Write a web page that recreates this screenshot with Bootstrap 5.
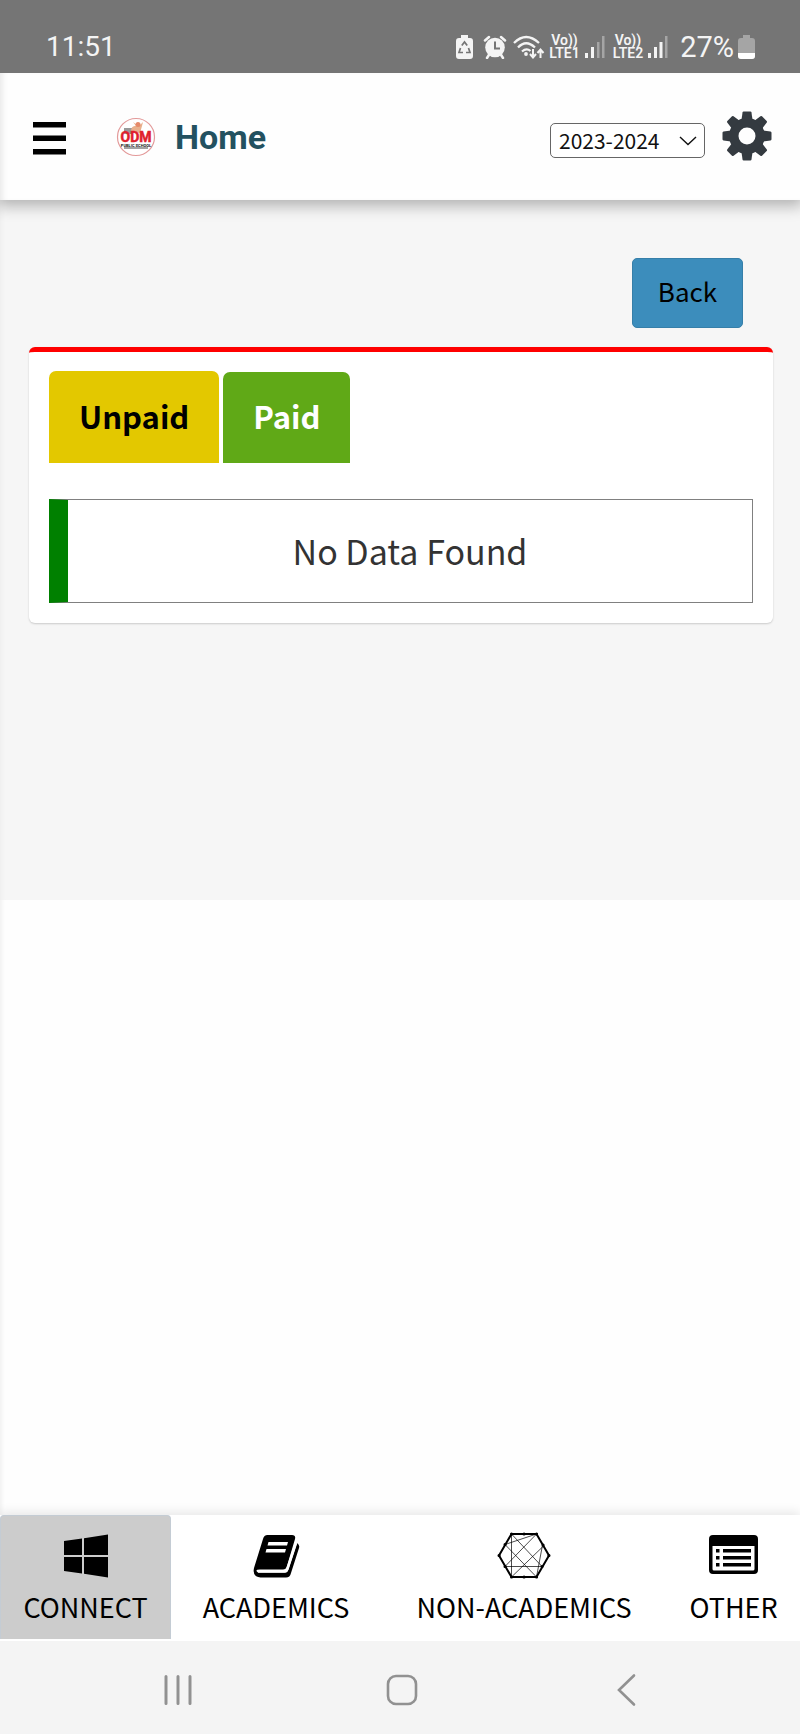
<!DOCTYPE html>
<html lang="en">
<head>
<meta charset="utf-8">
<meta name="viewport" content="width=device-width, initial-scale=1">
<title>Home</title>
<link href="https://cdn.jsdelivr.net/npm/bootstrap@5.3.0/dist/css/bootstrap.min.css" rel="stylesheet">
<style>
body { font-family: "Noto Sans CJK JP", "Noto Sans", sans-serif; color: #000; background: #fefefe; }
svg { display: block; flex: none; }
.status-bar { background: #757575; color: #f4f4f4; font-family: Roboto, sans-serif; padding: 24px 45px 0 46px; height: 73px; z-index: 2; }
.clock { font-size: 28px; line-height: 46px; }
.charge { font-size: 29px; line-height: 46px; }
.volte { font-size: 14px; line-height: 13px; font-weight: 600; }
.app-view { box-shadow: inset 5px 0 5px -4px #ececec; }
.app-bar { background: #fefefe; height: 127px; padding: 0 27px 0 33px; box-shadow: 0 3px 14px 3px rgba(0,0,0,.28), inset 6px 0 6px -4px #e6e6e6; z-index: 1; }
.page-title { font-family: Roboto, sans-serif; font-size: 34px; line-height: 40px; color: #235160; }
.year-select { width: 155px; height: 35px; font-size: 21px; line-height: 30px; padding: 0 8px 2px; color: #111; border: 1px solid #666; border-radius: 5px; appearance: none; background: #fff url("data:image/svg+xml,%3Csvg xmlns='http://www.w3.org/2000/svg' viewBox='0 0 18 10'%3E%3Cpath d='M1 1l8 7.500 8-7.500' fill='none' stroke='%23111' stroke-width='1.400'/%3E%3C/svg%3E") no-repeat right 7px center / 18px 10px; }
.main-area { background: #f6f6f6; box-shadow: inset 5px 0 5px -4px #ececec; min-height: 700px; padding: 58px 27px 0 29px; }
.btn-back { --bs-btn-bg: #3c8dbc; --bs-btn-border-color: #367fa9; --bs-btn-color: #000; --bs-btn-hover-bg: #367fa9; --bs-btn-font-size: 26px; --bs-btn-border-radius: 5px; height: 70px; width: 111px; padding: 0 0 4px; margin-right: 30px; line-height: 40px; }
.fee-card { border: 0; border-top: 5px solid #f00; border-radius: 6px; box-shadow: 0 1px 2px rgba(0,0,0,.18); padding: 19px 20px 20px; margin-top: 19px; background: #fff; }
.fee-tabs { border: 0; gap: 4px; }
.fee-tabs .nav-link { border: 0; border-radius: 7px 7px 0 0; font-size: 31px; font-weight: 700; line-height: 45px; padding: 21px 30px 25px; margin: 0; }
.fee-tabs .tab-unpaid, .fee-tabs .tab-unpaid:hover { background: #e3c800; color: #000; padding-top: 22px; }
.fee-tabs .tab-paid, .fee-tabs .tab-paid:hover { background: #60a917; color: #fff; }
.empty-note { margin-top: 36px; border: 1px solid #808080; border-left: 19px solid green; font-size: 34px; line-height: 50px; padding: 26px 0; color: #333; }
.tab-bar { display: grid; grid-template-columns: 171fr 210fr 286fr 133fr; background: #fff; height: 126px; box-shadow: 0 -3px 10px rgba(0,0,0,.09); padding-bottom: 2px; }
.tab-item { color: #000; font-size: 27px; line-height: 38px; padding-top: 15px; text-decoration: none; white-space: nowrap; }
.tab-item svg { height: 52px; margin-bottom: 6px; }
.tab-item.current { background: #ccc; border: 1px solid #c4ccd4; border-bottom: 0; border-radius: 4px 4px 0 0; padding-top: 14px; }
.system-nav { background: #f4f4f4; height: 93px; padding: 0 62px 0 66px; }
.system-nav button { background: none; border: 0; padding: 0; flex: 1; }
.system-nav svg { margin: 5px auto 0; }
.bare { background: none; border: 0; padding: 0; }
</style>
</head>
<body class="d-flex flex-column min-vh-100">
<div class="status-bar position-relative d-flex justify-content-between align-items-start">
  <span class="clock">11:51</span>
  <div class="d-flex align-items-center">
    <svg width="17" height="25" viewBox="0 0 17 25"><path d="M5 0h7v3h2q3 0 3 3v15q0 3-3 3H3q-3 0-3-3V6q0-3 3-3h2z" fill="#f4f4f4"/><path d="M5.800 10.500L8.500 7l2.700 3.500M12.500 13l1.500 4.500h-4M7 17.500H3L4.500 13" fill="none" stroke="#757575" stroke-width="1.700"/></svg>
    <svg class="ms-2" width="28" height="24" viewBox="2 0 28 24"><circle cx="16" cy="12.500" r="9.800" fill="#f4f4f4"/><path d="M6 5.500L10 2M22 2l4 3.500M10.500 19L8 23M21.500 19l2.500 4" stroke="#f4f4f4" stroke-width="2.500" stroke-linecap="round"/><path d="M16 6.500v7h5" fill="none" stroke="#757575" stroke-width="2"/></svg>
    <svg class="ms-1" width="32" height="24" viewBox="0 0 32 24"><g fill="none" stroke="#f4f4f4" stroke-width="2.300"><path d="M1 8Q13-4 26 8M5 12.500Q13 4 22 12.500M9 16.500q4.500-4 8.500-.5"/><path d="M20 14v8m-3-3l3 3.500 3-3.500M27.500 23v-8m-3 3l3-3.500 3 3.500" stroke-width="2"/></g><circle cx="13" cy="19" r="1.900" fill="#f4f4f4"/></svg>
    <span class="volte text-center ms-1">Vo))<br>LTE1</span>
    <svg class="ms-1" width="21" height="24" viewBox="0 0 21 24"><path d="M1 18h3v5H1zM7 12h3v11H7z" fill="#f4f4f4"/><path d="M13 7h2.500v16H13zM18 1h2.500v22H18z" fill="#a5a5a5"/></svg>
    <span class="volte text-center ms-2">Vo))<br>LTE2</span>
    <svg class="ms-1" width="21" height="24" viewBox="0 0 21 24"><path d="M1 18h3v5H1zM7 12h3v11H7zM12.500 7h3v16h-3z" fill="#f4f4f4"/><path d="M18 1h2.500v22H18z" fill="#a5a5a5"/></svg>
    <span class="charge ms-2 ps-1">27%</span>
    <svg class="ms-1" width="17" height="25" viewBox="0 0 17 25"><path d="M5 0h7v3h2q3 0 3 3v15q0 3-3 3H3q-3 0-3-3V6q0-3 3-3h2z" fill="#a5a5a5"/><path d="M0 18h17v3q0 3-3 3H3q-3 0-3-3z" fill="#fff"/></svg>
  </div>
</div>

<div class="app-view flex-grow-1 d-flex flex-column">
  <header class="app-bar d-flex align-items-center position-relative">
    <button class="bare" type="button" aria-label="Menu"><svg width="33" height="37" viewBox="0 0 33 37"><path d="M0 4h33v5.500H0zM0 17.500h33v5.500H0zM0 31h33v5.500H0z"/></svg></button>
    <svg class="ms-5" width="45" height="40" viewBox="0 0 45 40" role="img" aria-label="ODM Public School">
      <circle cx="22" cy="20" r="18.500" fill="#fff" stroke="#e39a9a" stroke-width="1.200"/>
      <path d="M10 11h8v6h-8z" fill="#999"/><path d="M17 15q0-7 5-6l-3-4 4 3h3l3-3-1 4-2 7z" fill="#e9b08c"/><circle cx="24" cy="7.500" r="2.500" fill="#e58a6a"/>
      <text x="22" y="25" text-anchor="middle" font-family="Roboto" font-weight="700" font-size="14" fill="#e0202c" stroke="#e0202c" stroke-width=".5">ODM</text>
      <text x="22" y="30" text-anchor="middle" font-family="Roboto" font-weight="700" font-size="4" fill="#111">PUBLIC SCHOOL</text>
      <path d="M10 31h24" stroke="#444"/>
    </svg>
    <h1 class="page-title fw-bold mb-0 ms-3">Home</h1>
    <select class="year-select ms-auto mt-2" aria-label="Academic year"><option>2023-2024</option></select>
    <button class="bare ms-3 mb-1" type="button" aria-label="Settings"><svg width="52" height="52" viewBox="-26 -27 52 52" fill="#343a40">
      <defs><path id="tooth" d="M-5.500-16l1-7.500q.2-1 1.200-1h6.600q1 0 1.200 1l1 7.500z"/></defs>
      <circle r="13.200" fill="none" stroke="#343a40" stroke-width="9.400"/>
      <use href="#tooth"/><use href="#tooth" transform="rotate(45)"/><use href="#tooth" transform="rotate(90)"/><use href="#tooth" transform="rotate(135)"/><use href="#tooth" transform="rotate(180)"/><use href="#tooth" transform="rotate(225)"/><use href="#tooth" transform="rotate(270)"/><use href="#tooth" transform="rotate(315)"/>
    </svg></button>
  </header>

  <main class="main-area">
    <div class="d-flex justify-content-end"><button type="button" class="btn btn-back">Back</button></div>
    <section class="card fee-card">
      <div class="nav nav-tabs fee-tabs align-items-end" role="tablist">
        <button class="nav-link tab-unpaid" type="button" role="tab" aria-selected="true">Unpaid</button>
        <button class="nav-link tab-paid" type="button" role="tab" aria-selected="false">Paid</button>
      </div>
      <div class="empty-note text-center">No Data Found</div>
    </section>
  </main>
</div>

<nav class="tab-bar" aria-label="Sections">
  <a class="tab-item current d-flex flex-column align-items-center" href="#connect">
    <svg width="46" viewBox="0 0 46 52"><path d="M1 11l18-2.500V25H1zM21 8.200L45 4.500V25H21zM1 27h18v16.500L1 41zM21 27h24v20.500l-24-3.700z"/></svg>
    CONNECT</a>
  <a class="tab-item d-flex flex-column align-items-center" href="#academics">
    <svg width="48" viewBox="0 0 48 52"><path d="M15.500 5H40q4 0 3 4l-8 27q-1 3.500-4 3.500H8q-4 0-3.500 1.500.5 1.500 3 1.500h26q2 0 3-3L45 13q3 2 2 5l-8 25q-1 4.500-5 4.500H8.500Q0 47 2 38l9-29q1-4 4.500-4z"/><path d="M16.500 12H36l-1 3.500H15.500zM14.500 19H34l-1 3.500H13.500z" fill="#fff"/><path d="M6 41.500h26.500q2 0 3-3L44 13" fill="none" stroke="#fff" stroke-width="2.500"/></svg>
    ACADEMICS</a>
  <a class="tab-item d-flex flex-column align-items-center" href="#non-academics">
    <svg width="54" viewBox="0 0 54 52" fill="none" stroke="#000"><path d="M2 25.500L14.500 4h25L52 25.500 39.500 47h-25z" stroke-width="2"/><path d="M14.500 4v43L47 15.500M14.500 4L45 36.500M39.500 4L8 36.500h37M39.500 4L8 14.500l31.500 32.500 6-32" stroke-width=".7"/><path d="M14.500 4h.1M27 4h.1M39.500 4h.1M2 25.500h.1M52 25.500h-.1M14.500 47h.1M27 47h.1M39.500 47h.1M8 14.500h.1M8 36.500h.1M46 15h.1M45 36.500h.1" stroke-width="3" stroke-linecap="round"/></svg>
    NON-ACADEMICS</a>
  <a class="tab-item d-flex flex-column align-items-center" href="#other">
    <svg width="49" viewBox="0 0 49 52"><path fill-rule="evenodd" d="M4 5h41q4 0 4 4v31q0 4-4 4H4q-4 0-4-4V9q0-4 4-4zm-.5 11v23q0 1.500 1.500 1.500h39q1.500 0 1.500-1.500V16z"/><path d="M7 19h3.500v3.500H7zM14 19h28v3.500H14zM7 26h3.500v3.500H7zM14 26h28v3.500H14zM7 33h3.500v3.500H7zM14 33h28v3.500H14z"/></svg>
    OTHER</a>
</nav>
<div class="system-nav d-flex align-items-center">
  <button type="button" aria-label="Recents"><svg width="30" height="32" viewBox="0 0 30 32"><path d="M3 2.500v27M15 2.500v27M27 2.500v27" stroke="#919191" stroke-width="3" stroke-linecap="round"/></svg></button>
  <button type="button" aria-label="Home screen"><svg width="32" height="32" viewBox="0 0 32 32"><rect x="2" y="2" width="28" height="28" rx="8" fill="none" stroke="#919191" stroke-width="2.600"/></svg></button>
  <button type="button" aria-label="Back"><svg width="20" height="34" viewBox="0 0 20 34"><path d="M18 2.500L3 17l15 14.500" fill="none" stroke="#919191" stroke-width="2.600" stroke-linecap="round"/></svg></button>
</div>
<script src="https://cdn.jsdelivr.net/npm/bootstrap@5.3.0/dist/js/bootstrap.bundle.min.js"></script>
</body>
</html>
